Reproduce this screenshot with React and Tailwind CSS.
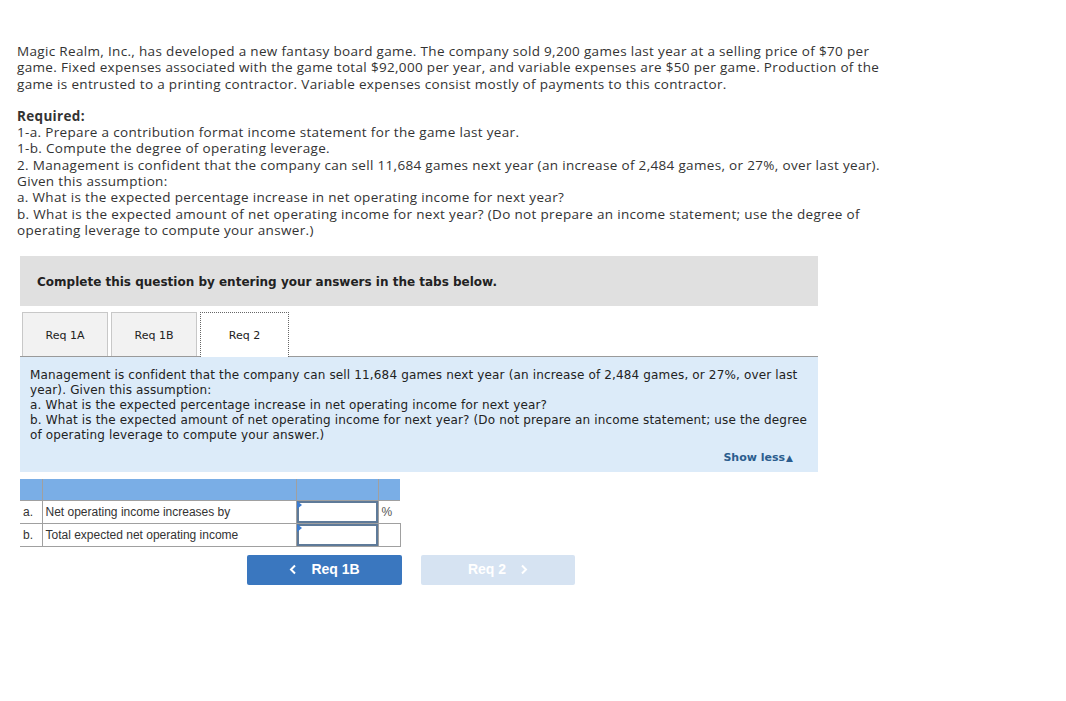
import React from 'react';

const TabButton = ({ label, active }) => (
  <div
    className={`flex items-center justify-center pt-[2px] text-[11px] text-[#222] ${
      active
        ? 'w-[89px] h-[45px] bg-white border border-dotted border-[#666] border-b-0 relative -mb-px z-10'
        : 'w-[86px] h-[44px] bg-[#f2f2f2] border border-[#c8c8c8] border-b-0'
    }`}
  >
    {label}
  </div>
);

const Chevron = ({ dir }) => (
  <svg width="8" height="11" viewBox="0 0 8 11" fill="none" stroke="currentColor" strokeWidth="2">
    {dir === 'left' ? <path d="M6 1.5 L2 5.5 L6 9.5" /> : <path d="M2 1.5 L6 5.5 L2 9.5" />}
  </svg>
);

const App = () => {
  const sans = { fontFamily: '"Open Sans", "Liberation Sans", sans-serif' };
  const verdana = { fontFamily: '"DejaVu Sans", Verdana, sans-serif' };
  const arial = { fontFamily: '"Liberation Sans", Arial, sans-serif' };

  return (
    <div className="w-[1066px] h-[701px] bg-white relative">
      {/* Problem text */}
      <div className="pt-[43px] pl-[17px] text-[13.5px] leading-[16.3px] text-[#333] tracking-[0.33px]" style={sans}>
        <p className="whitespace-nowrap">
          Magic Realm, Inc., has developed a new fantasy board game. The company sold 9,200 games last year at a selling price of $70 per
          <br />
          game. Fixed expenses associated with the game total $92,000 per year, and variable expenses are $50 per game. Production of the
          <br />
          game is entrusted to a printing contractor. Variable expenses consist mostly of payments to this contractor.
        </p>
        <p className="mt-[16px] font-bold">Required:</p>
        <p className="whitespace-nowrap">
          1-a. Prepare a contribution format income statement for the game last year.
          <br />
          1-b. Compute the degree of operating leverage.
          <br />
          2. Management is confident that the company can sell 11,684 games next year (an increase of 2,484 games, or 27%, over last year).
          <br />
          Given this assumption:
          <br />
          a. What is the expected percentage increase in net operating income for next year?
          <br />
          b. What is the expected amount of net operating income for next year? (Do not prepare an income statement; use the degree of
          <br />
          operating leverage to compute your answer.)
        </p>
      </div>

      {/* Instructions bar */}
      <div className="ml-[20px] mt-[18px] w-[798px] h-[50px] bg-[#e0e0e0] pl-[17px] pt-[12px]">
        <span className="text-[12px] font-bold text-[#222]" style={verdana}>
          Complete this question by entering your answers in the tabs below.
        </span>
      </div>

      {/* Tabs */}
      <div className="ml-[22px] mt-[6px] flex items-end gap-[3px]" style={verdana}>
        <TabButton label="Req 1A" />
        <TabButton label="Req 1B" />
        <TabButton label="Req 2" active />
      </div>

      {/* Question panel */}
      <div className="ml-[20px] w-[798px] h-[116px] bg-[#dcebf9] border-t border-[#9a9a9a] pt-[11px] px-[10px] relative" style={verdana}>
        <p className="text-[12px] leading-[15px] text-[#222] whitespace-nowrap tracking-[0.15px]">
          Management is confident that the company can sell 11,684 games next year (an increase of 2,484 games, or 27%, over last
          <br />
          year). Given this assumption:
          <br />
          a. What is the expected percentage increase in net operating income for next year?
          <br />
          b. What is the expected amount of net operating income for next year? (Do not prepare an income statement; use the degree
          <br />
          of operating leverage to compute your answer.)
        </p>
        <div className="absolute right-[25px] bottom-[6px] text-[11px] font-bold text-[#2b5d8e]">
          Show less<span className="text-[9px] ml-[1px]">▲</span>
        </div>
      </div>

      {/* Answer table */}
      <table className="ml-[20px] mt-[7px] border-collapse text-[12px] text-[#333]" style={arial}>
        <tbody>
          <tr className="h-[21px] bg-[#7aaee6]">
            <td className="w-[22px] border border-[#a0a0a0] border-t-0 border-l-0"></td>
            <td className="w-[254px] border border-[#a0a0a0] border-t-0"></td>
            <td className="w-[82px] border border-[#a0a0a0] border-t-0"></td>
            <td className="w-[22px] border border-[#a0a0a0] border-t-0 border-r-0"></td>
          </tr>
          <tr className="h-[22px]">
            <td className="border-b border-r border-[#a0a0a0] pl-[3px]">a.</td>
            <td className="border border-[#a0a0a0] pl-[3px]">Net operating income increases by</td>
            <td className="border border-[#a0a0a0] p-0">
              <div className="relative h-[22px] border-2 border-[#5e7a99] bg-white">
                <span className="absolute -left-[2px] -top-[2px] w-0 h-0 border-t-[4px] border-b-[4px] border-l-[5px] border-t-transparent border-b-transparent border-l-[#3b7bd0]"></span>
              </div>
            </td>
            <td className="border-b border-l border-[#a0a0a0] pl-[3px] text-[#555]">%</td>
          </tr>
          <tr className="h-[22px]">
            <td className="border-b border-r border-[#a0a0a0] pl-[3px]">b.</td>
            <td className="border border-[#a0a0a0] pl-[3px]">Total expected net operating income</td>
            <td className="border border-[#a0a0a0] p-0">
              <div className="relative h-[22px] border-2 border-[#5e7a99] bg-white">
                <span className="absolute -left-[2px] -top-[2px] w-0 h-0 border-t-[4px] border-b-[4px] border-l-[5px] border-t-transparent border-b-transparent border-l-[#3b7bd0]"></span>
              </div>
            </td>
            <td className="border-b border-l border-r border-[#a0a0a0]"></td>
          </tr>
        </tbody>
      </table>

      {/* Navigation buttons */}
      <div className="ml-[247px] mt-[8px] flex gap-[19px]" style={arial}>
        <button className="w-[155px] h-[30px] bg-[#3a77bf] rounded-[2px] text-white text-[14px] font-bold flex items-center justify-center gap-[14px]">
          <Chevron dir="left" />
          <span>Req 1B</span>
        </button>
        <button className="w-[154px] h-[30px] bg-[#d6e3f2] rounded-[2px] text-white text-[14px] font-bold flex items-center justify-center gap-[14px]">
          <span>Req 2</span>
          <Chevron dir="right" />
        </button>
      </div>
    </div>
  );
};

export default App;
